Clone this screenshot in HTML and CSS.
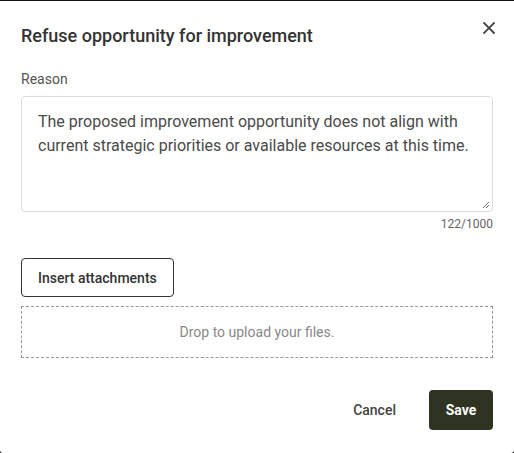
FILE: index.html
```html
<!DOCTYPE html>
<html>
<head>
<meta charset="utf-8">
<link rel="stylesheet" href="styles.css">
</head>
<body>
<div class="backdrop">
  <div class="dialog">
    <div class="header">
      <h1 class="title">Refuse opportunity for improvement</h1>
      <button class="close" aria-label="Close">
        <svg width="12" height="12" viewBox="0 0 12 12"><path d="M1 1L11 11M11 1L1 11" stroke="#444" stroke-width="1.8" stroke-linecap="square"/></svg>
      </button>
    </div>
    <div class="field">
      <label class="label">Reason</label>
      <div class="textarea">The proposed improvement opportunity does not align with current strategic priorities or available resources at this time.<span class="grip"><svg width="8" height="8" viewBox="0 0 8 8"><path d="M7 1L1 7M7 4L4 7" stroke="#777" stroke-width="1"/></svg></span></div>
      <div class="counter">122/1000</div>
    </div>
    <div class="attach">
      <button class="btn-outline">Insert attachments</button>
      <div class="dropzone">Drop to upload your files.</div>
    </div>
    <div class="footer">
      <button class="btn-text">Cancel</button>
      <button class="btn-primary">Save</button>
    </div>
  </div>
</div>
</body>
</html>
```
FILE: styles.css
```css
* { box-sizing: border-box; }
html, body { margin: 0; padding: 0; }
body { font-family: Roboto, "Liberation Sans", sans-serif; background: #fff; }
.backdrop { background: #111; padding-top: 1px; height: 453px; }
.dialog {
  background: #fff;
  height: 452px;
  padding: 0 21px 0 21px;
  display: flex;
  flex-direction: column;
  border-radius: 0 0 3px 3px;
}
.header { display: flex; justify-content: space-between; align-items: flex-start; padding-top: 23px; }
.title { margin: 0; font-size: 18px; font-weight: 500; color: #333; line-height: 24px; }
.close { border: 0; background: none; padding: 0; margin: -2px -2px 0 0; width: 12px; height: 12px; display: flex; }
.field { margin-top: 23px; display: flex; flex-direction: column; }
.label { font-size: 14px; color: #555; line-height: 16px; }
.textarea {
  margin-top: 9px;
  position: relative;
  height: 116px;
  border: 1px solid #dcdcdc;
  border-radius: 4px;
  padding: 13px 16px;
  font-size: 16px;
  line-height: 24px;
  color: #4a4a4a;
}
.grip { position: absolute; right: 2px; bottom: 2px; display: flex; }
.counter { text-align: right; font-size: 12px; color: #666; margin-top: 5px; line-height: 15px; }
.attach { margin-top: 26px; display: flex; flex-direction: column; gap: 9px; }
.btn-outline {
  align-self: flex-start;
  height: 39px;
  padding: 0 16px;
  border: 1px solid #333;
  border-radius: 4px;
  background: #fff;
  font-family: inherit;
  font-size: 14px;
  font-weight: 500;
  color: #333;
}
.dropzone {
  height: 52px;
  border: 1px dashed #999;
  display: flex;
  align-items: center;
  justify-content: center;
  font-size: 14px;
  color: #888;
}
.footer { margin-top: 32px; display: flex; justify-content: flex-end; align-items: center; gap: 17px; }
.btn-text { border: 0; background: none; font-family: inherit; font-size: 14px; font-weight: 500; color: #444; padding: 0 16px; height: 40px; }
.btn-primary {
  height: 40px;
  width: 64px;
  border: 0;
  border-radius: 4px;
  background: #2f3322;
  color: #fff;
  font-family: inherit;
  font-size: 14px;
  font-weight: 700;
}
```
